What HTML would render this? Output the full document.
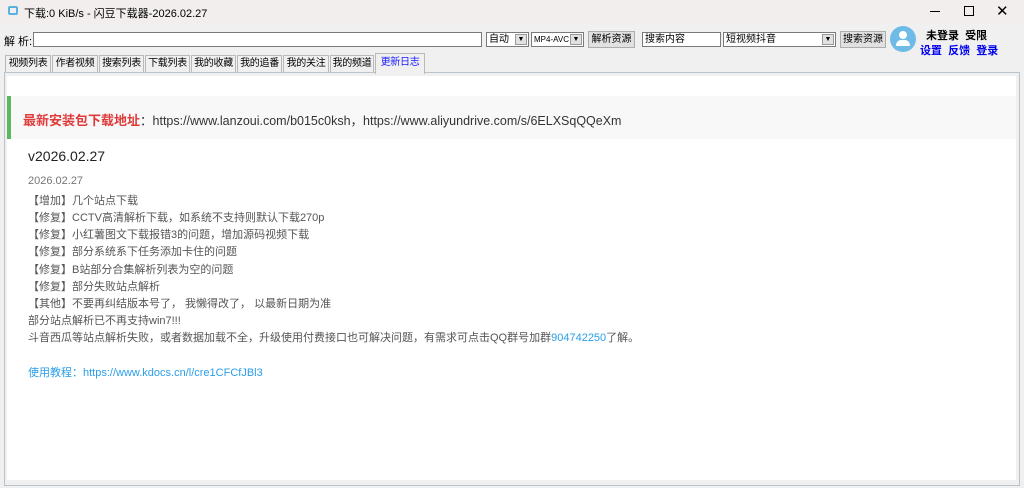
<!DOCTYPE html>
<html><head><meta charset="utf-8"><style>
*{margin:0;padding:0;box-sizing:border-box}
body{width:1024px;height:488px;background:#f0f0f0;font-family:"Liberation Sans","Noto Sans CJK SC",sans-serif;position:relative;overflow:hidden;font-size:12px;color:#000}
.a{position:absolute}
.title{left:0;top:0;width:1024px;height:24px;background:#f3eeee}
.inp{background:#fff;border:1px solid #7a7a7a;height:15px;font-size:10px;line-height:13px;padding-left:2px;white-space:nowrap;overflow:hidden}
.btn{background:#e1e1e1;border:1px solid #adadad;height:17px;font-size:10px;line-height:15px;text-align:center;white-space:nowrap}
.dd{position:absolute;right:1px;top:1px;width:12px;height:11px;background:#e1e1e1;border:1px solid #999;font-size:7px;line-height:9px;text-align:center}
.tab{top:55px;height:18px;border:1px solid #b9b9b9;border-bottom:none;background:#f0f0f0;font-size:10px;line-height:16px;text-align:center;white-space:nowrap;overflow:hidden;letter-spacing:-0.3px}
.l{position:absolute;left:28px;font-size:11px;color:#555;white-space:nowrap}
</style></head><body>
<div class="a title"></div>
<div class="a" style="left:8px;top:6px;width:10px;height:9px;border:2px solid #5ab2e0;border-radius:2px"></div>
<div class="a" style="left:24px;top:5px;font-size:11px">下载:0 KiB/s - 闪豆下载器-2026.02.27</div>
<div class="a" style="left:930px;top:11px;width:10px;height:1px;background:#000"></div>
<div class="a" style="left:964px;top:6px;width:10px;height:10px;border:1px solid #000"></div>
<div class="a" style="left:996px;top:2px;font-size:15px">✕</div>

<div class="a" style="left:4px;top:33px;font-size:11px">解 析:</div>
<div class="a inp" style="left:33px;top:32px;width:449px"></div>
<div class="a inp" style="left:486px;top:32px;width:43px">自动<div class="dd">▼</div></div>
<div class="a inp" style="left:531px;top:32px;width:53px;font-size:8px">MP4-AVC<div class="dd">▼</div></div>
<div class="a btn" style="left:588px;top:31px;width:47px">解析资源</div>
<div class="a inp" style="left:642px;top:32px;width:79px">搜索内容</div>
<div class="a inp" style="left:723px;top:32px;width:113px">短视频抖音<div class="dd">▼</div></div>
<div class="a btn" style="left:840px;top:31px;width:46px">搜索资源</div>
<div class="a" style="left:890px;top:26px;width:26px;height:26px;border-radius:50%;background:#6fbbe8"></div>
<div class="a" style="left:899px;top:31px;width:8px;height:8px;border-radius:50%;background:#fff"></div>
<div class="a" style="left:896px;top:40px;width:14px;height:6px;border-radius:6px 6px 1px 1px;background:#fff"></div>
<div class="a" style="left:926px;top:27px;font-size:11px;font-weight:bold">未登录&nbsp; 受限</div>
<div class="a" style="left:920px;top:42px;font-size:11px;font-weight:bold;color:#0000ee">设置 &nbsp;反馈 &nbsp;登录</div>

<div class="a tab" style="left:5px;width:46px">视频列表</div>
<div class="a tab" style="left:52px;width:46px">作者视频</div>
<div class="a tab" style="left:99px;width:45px">搜索列表</div>
<div class="a tab" style="left:145px;width:45px">下载列表</div>
<div class="a tab" style="left:191px;width:45px">我的收藏</div>
<div class="a tab" style="left:237px;width:45px">我的追番</div>
<div class="a tab" style="left:283px;width:46px">我的关注</div>
<div class="a tab" style="left:330px;width:44px">我的频道</div>
<div class="a" style="left:4px;top:72px;width:1016px;height:414px;border:1px solid #b9c3cc;background:#f0f0f0"></div>
<div class="a tab" style="left:375px;top:53px;width:50px;height:21px;color:#1a1aff;z-index:2;line-height:18px">更新日志</div>
<div class="a" style="left:7px;top:76px;width:1009px;height:404px;background:#fff"></div>

<div class="a" style="left:7px;top:96px;width:1009px;height:43px;background:#f8f8f8;border-left:4px solid #5cb85c"></div>
<div class="a" style="left:23px;top:110px;font-size:12.5px;white-space:nowrap;color:#333"><b style="color:#e03a3a;font-size:13px">最新安装包下载地址</b>：https://www.lanzoui.com/b015c0ksh，https://www.aliyundrive.com/s/6ELXSqQQeXm</div>
<div class="a" style="left:28px;top:148px;font-size:14px;color:#222">v2026.02.27</div>
<div class="l" style="top:175px;color:#777">2026.02.27</div>
<div class="l" style="top:192px">【增加】几个站点下载</div>
<div class="l" style="top:209px">【修复】CCTV高清解析下载，如系统不支持则默认下载270p</div>
<div class="l" style="top:226px">【修复】小红薯图文下载报错3的问题，增加源码视频下载</div>
<div class="l" style="top:243px">【修复】部分系统系下任务添加卡住的问题</div>
<div class="l" style="top:261px">【修复】B站部分合集解析列表为空的问题</div>
<div class="l" style="top:278px">【修复】部分失败站点解析</div>
<div class="l" style="top:295px">【其他】不要再纠结版本号了， 我懒得改了， 以最新日期为准</div>
<div class="l" style="top:312px">部分站点解析已不再支持win7!!!</div>
<div class="l" style="top:329px">斗音西瓜等站点解析失败，或者数据加载不全，升级使用付费接口也可解决问题，有需求可点击QQ群号加群<span style="color:#2a9ee8">904742250</span>了解。</div>
<div class="l" style="top:364px;color:#2a9ee8">使用教程：https://www.kdocs.cn/l/cre1CFCfJBl3</div>
</body></html>
